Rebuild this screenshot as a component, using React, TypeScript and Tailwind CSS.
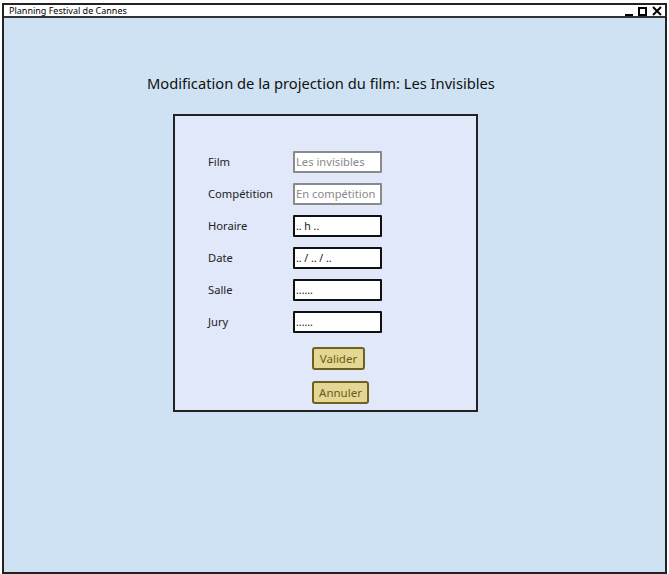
import React from "react";

const font = { fontFamily: '"Noto Sans", "Open Sans", sans-serif' };

function Row({ label, value, muted }: { label: string; value: string; muted?: boolean }) {
  return (
    <div className="flex items-center h-[32px]">
      <div className="w-[85px] text-[11.2px] text-[#222]">{label}</div>
      <div
        className={
          muted
            ? "w-[89px] h-[22px] flex items-center bg-white border-2 border-[#8a8a8a] pl-[1px] text-[11.2px] text-[#8a8a8a] leading-none whitespace-nowrap overflow-hidden rounded-[1px]"
            : "w-[89px] h-[22px] flex items-center bg-white border-2 border-[#111] pl-[1px] text-[10.5px] text-[#111] leading-none whitespace-nowrap overflow-hidden rounded-[1px]"
        }
      >
        {value}
      </div>
    </div>
  );
}

function Btn({ label, w }: { label: string; w: string }) {
  return (
    <div
      className={`${w} h-[23px] flex items-center justify-center bg-[#e4d794] border-2 border-[#6f6020] rounded-[3px] text-[11.5px] text-[#6b5a1c]`}
    >
      {label}
    </div>
  );
}

export default function App() {
  return (
    <div className="w-[669px] h-[574px] bg-white relative overflow-hidden" style={font}>
      <div className="ml-[2px] mt-[3px] w-[665px] h-[571px] border-2 border-[#222] flex flex-col bg-[#cfe2f3]">
        <div className="h-[13px] bg-white border-b-2 border-[#333] flex items-center justify-between pl-[5px] pr-[3px]">
          <span className="text-[9px] leading-none text-black">Planning Festival de Cannes</span>
          <div className="flex items-end gap-[5px] h-[10px]">
            <div className="w-[8px] h-[2px] bg-black" />
            <div className="w-[9px] h-[9px] border-2 border-black" />
            <svg width="10" height="10" viewBox="0 0 10 10">
              <path d="M1 1 L9 9 M9 1 L1 9" stroke="black" strokeWidth="2" />
            </svg>
          </div>
        </div>
        <div className="flex-1 flex flex-col">
          <div className="pl-[143px] mt-[54px] text-[14.7px] leading-[22px] text-[#111]">
            Modification de la projection du film: Les Invisibles
          </div>
          <div className="ml-[169px] mt-[20px] w-[305px] h-[298px] bg-[#e0e8fa] border-2 border-[#222] pt-[30px] pl-[33px]">
            <Row label="Film" value="Les invisibles" muted />
            <Row label="Compétition" value="En compétition" muted />
            <Row label="Horaire" value=".. h .." />
            <Row label="Date" value=".. / .. / .." />
            <Row label="Salle" value="......" />
            <Row label="Jury" value="......" />
            <div className="pl-[104px] mt-[9px] flex flex-col gap-[11px]">
              <Btn label="Valider" w="w-[53px]" />
              <Btn label="Annuler" w="w-[57px]" />
            </div>
          </div>
        </div>
      </div>
    </div>
  );
}
